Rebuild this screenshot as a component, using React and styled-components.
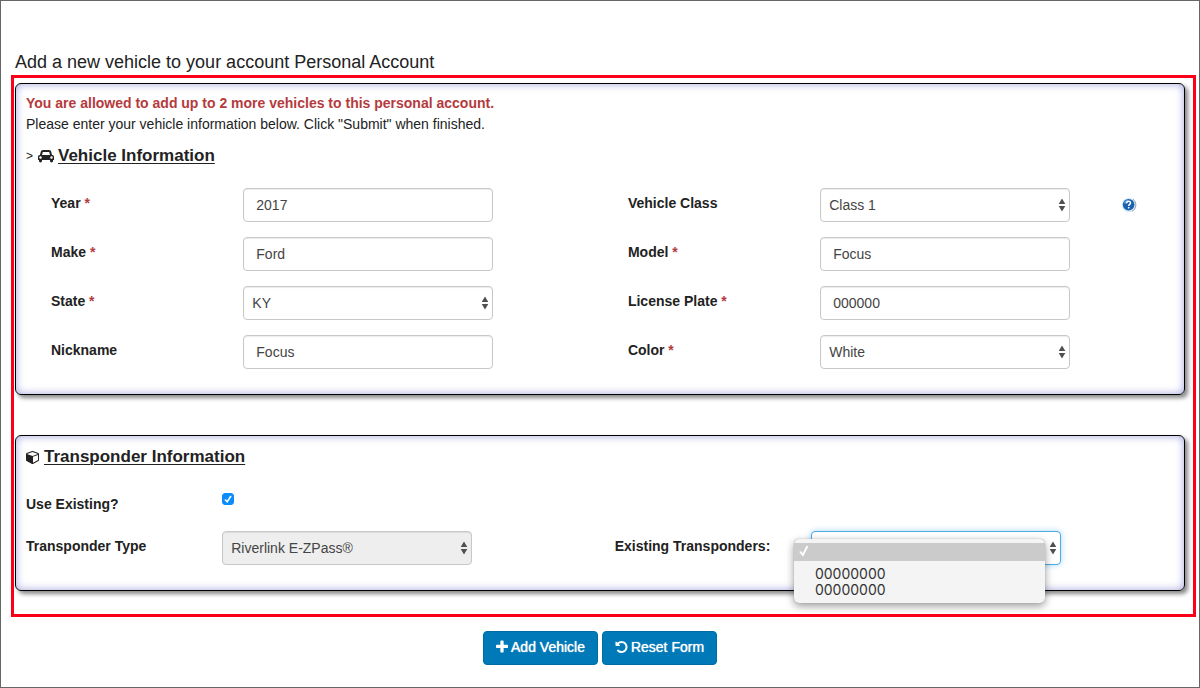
import React, { useState } from "react";
import styled, { createGlobalStyle, css } from "styled-components";

const GlobalStyle = createGlobalStyle`
  *, *::before, *::after { box-sizing: border-box; }
  body {
    margin: 0;
    background: #fff;
    color: #222;
    font: 14px/20px "Liberation Sans", Arial, sans-serif;
  }
`;

const Page = styled.main`
  min-height: 100vh;
  border: 1px solid #666;
  padding: 48px 3px 20px 10px;
`;

const PageTitle = styled.h1`
  margin: 0;
  padding-left: 4px;
  font-size: 18px;
  font-weight: 400;
  line-height: 26px;
`;

const Highlight = styled.div`
  border: 3px solid #fb0019;
  padding: 5px 8px 23px 1px;
  display: grid;
  gap: 40px;
`;

const Panel = styled.section`
  border: 1px solid #000;
  border-radius: 6px;
  padding: 9px 10px 25px;
  box-shadow: 3px 3px 4px #888, inset 0 0 8px #a4a4de;
`;

const Notice = styled.p`
  margin: 0;
  line-height: 21px;
  font-weight: ${(p) => (p.$alert ? 700 : 400)};
  color: ${(p) => (p.$alert ? "#b53a3d" : "#222")};
`;

const SectionHeading = styled.div`
  display: flex;
  align-items: center;
  gap: 4px;
  margin: ${(p) => (p.$spaced ? "10px" : "1px")} 0 21px;

  h2 {
    margin: 0;
    font-size: 17px;
    line-height: 22px;
    text-decoration: underline;
    text-decoration-thickness: 1px;
    text-underline-offset: 2px;
  }
`;

const Chevron = styled.span`
  width: 8px;
  font-size: 12px;
`;

const FieldGrid = styled.div`
  display: grid;
  grid-template-columns: 20fr 40fr 20fr 37fr;
  grid-template-rows: ${(p) => p.$rows};
  row-gap: 15px;
  padding-left: ${(p) => (p.$indented ? "25px" : 0)};
  margin-right: ${(p) => (p.$indented ? "-2px" : 0)};
`;

const Label = styled.label`
  padding-top: 5px;
  font-weight: 700;
`;

const Required = styled.span`
  color: #b53a3d;
`;

const controlStyle = css`
  width: 250px;
  height: 34px;
  border: 1px solid ${(p) => (p.$active ? "#4fabe3" : "#c8c8c8")};
  border-radius: 4px;
  background: #fff;
  color: #444;
  font: inherit;
  outline: none;
  box-shadow: ${(p) =>
    p.$active ? "0 0 6px #a9d6f2" : "inset 0 1px 1px rgba(0, 0, 0, 0.08)"};
`;

const TextInput = styled.input`
  ${controlStyle}
  padding: 0 12px;
`;

const SelectBox = styled.div`
  position: relative;
  width: 250px;
  height: 34px;
`;

const StyledSelect = styled.select`
  ${controlStyle}
  appearance: none;
  padding: 0 20px 0 8px;

  &:disabled {
    background: #eee;
    opacity: 1;
  }
`;

const SelectArrows = styled.svg`
  position: absolute;
  right: 4px;
  top: 10px;
  width: 8px;
  height: 14px;
  fill: #505050;
  pointer-events: none;
`;

const ControlCell = styled.div`
  display: flex;
  align-items: center;
  gap: 51px;
`;

const HelpButton = styled.button`
  display: flex;
  padding: 0;
  border: 0;
  background: none;
`;

const CheckboxBox = styled.div`
  display: grid;
  justify-content: start;
  align-content: start;
  padding-top: 4px;

  > * {
    grid-area: 1 / 1;
  }
  svg {
    width: 12px;
    height: 12px;
    pointer-events: none;
  }
`;

const Checkbox = styled.input`
  appearance: none;
  width: 12px;
  height: 12px;
  margin: 0;
  border-radius: 3px;
  background: #fff;
  border: 1px solid #999;

  &:checked {
    background: #0a8dfb;
    border-color: #0a8dfb;
  }
`;

const Menu = styled.ul`
  position: absolute;
  z-index: 1;
  left: -17px;
  top: 8px;
  width: 251px;
  margin: 0;
  padding: 4px 0 5px;
  list-style: none;
  border-radius: 5px;
  background: #f4f4f4;
  box-shadow: 0 0 1px #888, 0 3px 9px rgba(0, 0, 0, 0.4);
  font: 14px/16px Inter, sans-serif;
  color: #333;
`;

const MenuItem = styled.li`
  padding-left: 21px;
  ${(p) =>
    p.$selected &&
    css`
      height: 18px;
      margin-bottom: 5px;
      padding: 0 0 0 4px;
      background: #cbcbcb;
      color: #fff;
    `}
  svg {
    display: block;
  }
`;

const Actions = styled.div`
  display: flex;
  justify-content: center;
  gap: 4px;
  margin-top: 14px;
  padding-right: 7px;
`;

const ActionButton = styled.button`
  display: flex;
  align-items: center;
  justify-content: center;
  gap: 3px;
  width: 115px;
  height: 34px;
  padding: 0 0 2px;
  border: 1px solid #006ca6;
  border-radius: 4px;
  background: #0079b8;
  color: #fff;
  font: inherit;
  text-shadow: 0 0 1px #fff;
  white-space: nowrap;
`;

const glyphs = {
  car: [
    2048,
    "M480 448q0 66 -47 113t-113 47t-113 -47t-47 -113t47 -113t113 -47t113 47t47 113zM516 768h1016l-89 357q-2 8 -14 17.5t-21 9.5h-768q-9 0 -21 -9.5t-14 -17.5zM1888 448q0 66 -47 113t-113 47t-113 -47t-47 -113t47 -113t113 -47t113 47t47 113zM2048 544v-384q0 -14 -9 -23t-23 -9h-96v-128q0 -80 -56 -136t-136 -56t-136 56t-56 136v128h-1024v-128q0 -80 -56 -136t-136 -56t-136 56t-56 136v128h-96q-14 0 -23 9t-9 23v384q0 93 65.5 158.5t158.5 65.5h28l105 419q23 94 104 157.5t179 63.5h768q98 0 179 -63.5t104 -157.5l105 -419h28q93 0 158.5 -65.5t65.5 -158.5z",
  ],
  cube: [
    1792,
    "M896 -93l640 349v636l-640 -233v-752zM832 772l698 254l-698 254l-698 -254zM1664 1024v-768q0 -35 -18 -65t-49 -47l-704 -384q-28 -16 -61 -16t-61 16l-704 384q-31 17 -49 47t-18 65v768q0 40 23 73t61 47l704 256q22 8 44 8t44 -8l704 -256q38 -14 61 -47t23 -73z",
  ],
  plus: [
    1408,
    "M1408 800v-192q0 -40 -28 -68t-68 -28h-416v-416q0 -40 -28 -68t-68 -28h-192q-40 0 -68 28t-28 68v416h-416q-40 0 -68 28t-28 68v192q0 40 28 68t68 28h416v416q0 40 28 68t68 28h192q40 0 68 -28t28 -68v-416h416q40 0 68 -28t28 -68z",
  ],
  undo: [
    1536,
    "M1536 640q0 -156 -61 -298t-164 -245t-245 -164t-298 -61q-172 0 -327 72.5t-264 204.5q-7 10 -6.5 22.5t8.5 20.5l137 138q10 9 25 9q16 -2 23 -12q73 -95 179 -147t225 -52q104 0 198.5 40.5t163.5 109.5t109.5 163.5t40.5 198.5t-40.5 198.5t-109.5 163.5t-163.5 109.5t-198.5 40.5q-98 0 -188 -35.5t-160 -101.5l137 -138q31 -30 14 -69q-17 -40 -59 -40h-448q-26 0 -45 19t-19 45v448q0 42 40 59q39 17 69 -14l130 -129q107 101 244.5 156.5t284.5 55.5q156 0 298 -61t245 -164t164 -245t61 -298z",
  ],
};

function Icon({ name, width, height = 16 }) {
  const [w, d] = glyphs[name];
  return (
    <svg
      width={width}
      height={height}
      viewBox={`0 -1536 ${w} 1792`}
      fill="currentColor"
      aria-hidden="true"
    >
      <path transform="scale(1 -1)" d={d} />
    </svg>
  );
}

function HelpIcon() {
  return (
    <svg width="16" height="16" viewBox="0 0 16 16" aria-hidden="true">
      <circle cx="8" cy="8" r="7.3" fill="#d8ebf6" />
      <path d="M12 2.2A7.200 7.200 0 0 1 11 14.300" fill="none" stroke="#7f9199" strokeWidth=".8" />
      <circle cx="7.600" cy="7.700" r="5.800" fill="#1a5fb0" />
      <path d="M2.800 6A5 5 0 0 1 7.500 2.700L5 7Z" fill="#5c9edb" />
      <path
        d="M5.700 6.300C5.700 3.600 9.700 3.800 9.500 6.100C9.400 7.400 7.700 7.300 7.700 8.900M7.700 10v1.500"
        fill="none"
        stroke="#fff"
        strokeWidth="1.500"
      />
    </svg>
  );
}

function Select({ id, value, disabled, active, children }) {
  return (
    <SelectBox>
      <StyledSelect id={id} defaultValue={value} disabled={disabled} $active={active}>
        <option>{value}</option>
      </StyledSelect>
      <SelectArrows viewBox="0 0 8 14" aria-hidden="true">
        <path d="M4 .5L7.300 6H.7ZM4 13.500L.7 8h6.600Z" />
      </SelectArrows>
      {children}
    </SelectBox>
  );
}

function FieldLabel({ id, required, children }) {
  return (
    <Label htmlFor={id}>
      {children}
      {required && <Required> *</Required>}
    </Label>
  );
}

const vehicleFields = [
  { id: "year", label: "Year", required: true, value: "2017" },
  { id: "class", label: "Vehicle Class", select: true, value: "Class 1", help: true },
  { id: "make", label: "Make", required: true, value: "Ford" },
  { id: "model", label: "Model", required: true, value: "Focus" },
  { id: "state", label: "State", required: true, select: true, value: "KY" },
  { id: "plate", label: "License Plate", required: true, value: "000000" },
  { id: "nickname", label: "Nickname", value: "Focus" },
  { id: "color", label: "Color", required: true, select: true, value: "White" },
];

export default function App() {
  const [useExisting, setUseExisting] = useState(true);
  return (
    <>
      <GlobalStyle />
      <Page>
        <PageTitle>Add a new vehicle to your account Personal Account</PageTitle>
        <form onSubmit={(e) => e.preventDefault()}>
          <Highlight>
            <Panel>
              <Notice $alert>
                You are allowed to add up to 2 more vehicles to this personal account.
              </Notice>
              <Notice>
                Please enter your vehicle information below. Click "Submit" when finished.
              </Notice>
              <SectionHeading $spaced>
                <Chevron>&gt;</Chevron>
                <Icon name="car" width={16} />
                <h2>Vehicle Information</h2>
              </SectionHeading>
              <FieldGrid $indented $rows="repeat(4, 34px)">
                {vehicleFields.map((f) => (
                  <React.Fragment key={f.id}>
                    <FieldLabel id={f.id} required={f.required}>
                      {f.label}
                    </FieldLabel>
                    <ControlCell>
                      {f.select ? (
                        <Select id={f.id} value={f.value} />
                      ) : (
                        <TextInput id={f.id} defaultValue={f.value} />
                      )}
                      {f.help && (
                        <HelpButton type="button" aria-label="Help">
                          <HelpIcon />
                        </HelpButton>
                      )}
                    </ControlCell>
                  </React.Fragment>
                ))}
              </FieldGrid>
            </Panel>

            <Panel>
              <SectionHeading>
                <Icon name="cube" width={14} height={14} />
                <h2>Transponder Information</h2>
              </SectionHeading>
              <FieldGrid $rows="27px 34px">
                <FieldLabel id="existing">Use Existing?</FieldLabel>
                <CheckboxBox>
                  <Checkbox
                    id="existing"
                    type="checkbox"
                    checked={useExisting}
                    onChange={(e) => setUseExisting(e.target.checked)}
                  />
                  {useExisting && (
                    <svg viewBox="0 0 12 12" aria-hidden="true">
                      <path
                        d="M3 6.500L5.200 8.800L9 3"
                        fill="none"
                        stroke="#fff"
                        strokeWidth="1.600"
                      />
                    </svg>
                  )}
                </CheckboxBox>
                <span />
                <span />
                <FieldLabel id="type">Transponder Type</FieldLabel>
                <Select id="type" value="Riverlink E-ZPass®" disabled />
                <FieldLabel id="transponders">Existing Transponders:</FieldLabel>
                <Select id="transponders" value="" active>
                  <Menu role="listbox" aria-label="Existing Transponders">
                    <MenuItem role="option" aria-selected="true" $selected>
                      <svg width="12" height="15" viewBox="0 0 12 15" aria-hidden="true">
                        <path
                          d="M2 8.500L4.800 12L9.500 3"
                          fill="none"
                          stroke="#fff"
                          strokeWidth="1.800"
                        />
                      </svg>
                    </MenuItem>
                    <MenuItem role="option" aria-selected="false">00000000</MenuItem>
                    <MenuItem role="option" aria-selected="false">00000000</MenuItem>
                  </Menu>
                </Select>
              </FieldGrid>
            </Panel>
          </Highlight>
          <Actions>
            <ActionButton type="submit">
              <Icon name="plus" width={12} />
              Add Vehicle
            </ActionButton>
            <ActionButton type="reset">
              <Icon name="undo" width={13} height={14} />
              Reset Form
            </ActionButton>
          </Actions>
        </form>
      </Page>
    </>
  );
}
